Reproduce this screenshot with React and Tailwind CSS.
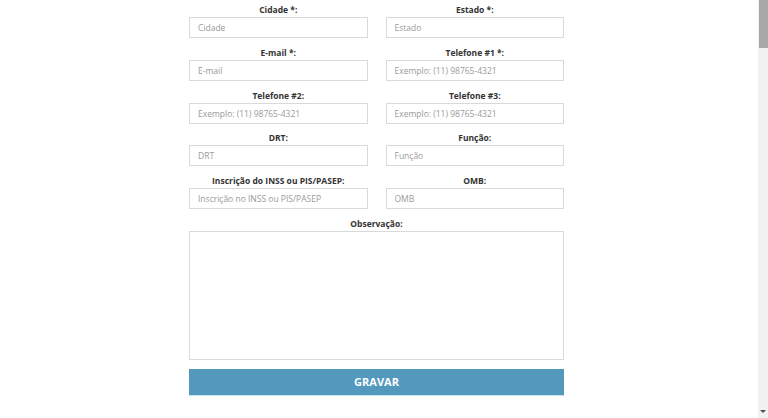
import React from "react";

const rows = [
  [["Cidade *:", "Cidade"], ["Estado *:", "Estado"]],
  [["E-mail *:", "E-mail"], ["Telefone #1 *:", "Exemplo: (11) 98765-4321"]],
  [["Telefone #2:", "Exemplo: (11) 98765-4321"], ["Telefone #3:", "Exemplo: (11) 98765-4321"]],
  [["DRT:", "DRT"], ["Função:", "Função"]],
  [["Inscrição do INSS ou PIS/PASEP:", "Inscrição no INSS ou PIS/PASEP"], ["OMB:", "OMB"]],
];

function Field({ label, ph }) {
  return (
    <div className="flex flex-col mb-[6.8px]">
      <label className="block text-center text-[8.5px] leading-[15px] font-bold text-[#333]">{label}</label>
      <input
        placeholder={ph}
        className="h-[21px] w-full border border-[#d9d9d9] bg-white px-[8px] text-[8.5px] text-[#555] placeholder:text-[#9a9a9a] outline-none"
      />
    </div>
  );
}

export default function App() {
  return (
    <div className="flex h-[418px] w-[768px] overflow-hidden bg-white" style={{ fontFamily: '"Open Sans", sans-serif' }}>
      <div className="flex-1 pl-[189px] pt-[2px]">
        <div className="w-[375px]">
          <div className="grid grid-cols-2 gap-x-[18px]">
            {rows.map((r, i) => (
              <React.Fragment key={i}>
                <Field label={r[0][0]} ph={r[0][1]} />
                <Field label={r[1][0]} ph={r[1][1]} />
              </React.Fragment>
            ))}
          </div>
          <label className="block text-center text-[8.5px] leading-[15px] font-bold text-[#333]">Observação:</label>
          <textarea className="block h-[129px] w-full resize-none border border-[#d9d9d9] outline-none" />
          <button className="mt-[9px] h-[26px] w-full bg-[#5399bd] text-[11px] font-bold text-white shadow-[0_1px_0_#c9e1ee]">
            GRAVAR
          </button>
        </div>
      </div>
      <div className="relative flex w-[10px] flex-col bg-[#f1f1f1]">
        <div className="ml-[1px] h-[48px] w-[9px] bg-[#a8a8a8]" />
        <svg className="absolute bottom-[5px] left-[2px]" width="6" height="3" viewBox="0 0 6 3">
          <path d="M0 0H6L3 3Z" fill="#505050" />
        </svg>
      </div>
    </div>
  );
}
